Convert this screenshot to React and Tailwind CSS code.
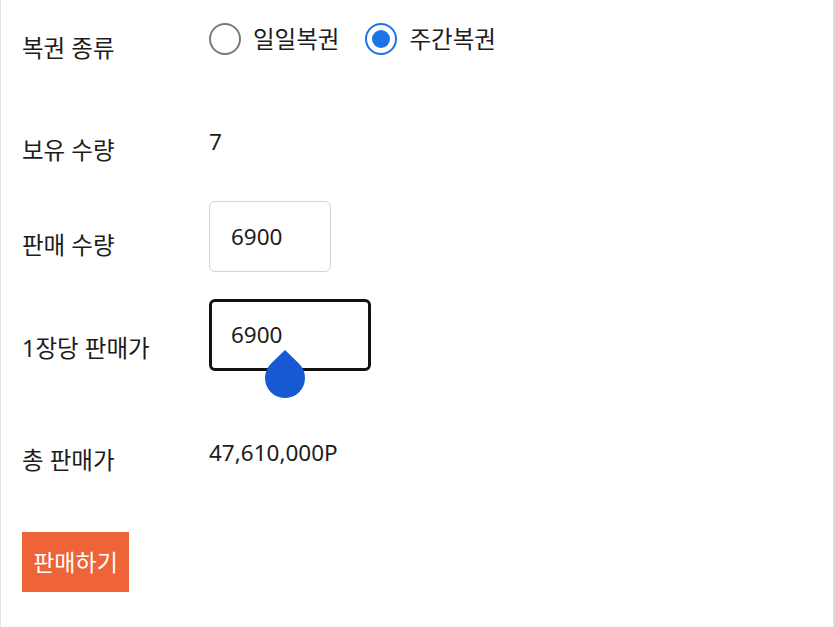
import { useState } from 'react';

const font = { fontFamily: '"Noto Sans", "Noto Sans CJK KR", sans-serif' };

function Radio({ checked, label, onClick }) {
  return (
    <button type="button" onClick={onClick} className="flex items-center h-8">
      <span
        className={`w-8 h-8 rounded-full border-2 flex items-center justify-center ${
          checked ? 'border-[#1a73e8]' : 'border-[#7a7a7a]'
        }`}
      >
        {checked && <span className="w-[18px] h-[18px] rounded-full bg-[#1a73e8]" />}
      </span>
      <span className="ml-[12px] leading-8 text-[23.5px]">{label}</span>
    </button>
  );
}

export default function App() {
  const [type, setType] = useState('weekly');

  return (
    <div
      style={font}
      className="w-[835px] h-[627px] bg-white border-l border-l-[#e4e4e4] border-r-2 border-r-[#dcdcdc] text-[23.5px] text-[#1c1c1c] pl-[21px] pt-[23px] overflow-hidden"
    >
      {/* 복권 종류 */}
      <div className="flex items-start">
        <div className="w-[187px] pt-[9px] leading-8">복권 종류</div>
        <div className="flex gap-[26px]">
          <Radio checked={type === 'daily'} label="일일복권" onClick={() => setType('daily')} />
          <Radio checked={type === 'weekly'} label="주간복권" onClick={() => setType('weekly')} />
        </div>
      </div>

      {/* 보유 수량 */}
      <div className="flex items-start mt-[62px]">
        <div className="w-[187px] pt-2 leading-8">보유 수량</div>
        <div className="leading-8 text-[22.5px]">7</div>
      </div>

      {/* 판매 수량 */}
      <div className="flex items-start mt-[35px]">
        <div className="w-[187px] pt-[28px] leading-8">판매 수량</div>
        <div className="w-[122px] h-[71px] border border-[#d4d4d4] rounded-md flex items-center pl-[21px] text-[22.5px]">
          6900
        </div>
      </div>

      {/* 1장당 판매가 */}
      <div className="flex items-start mt-[27px]">
        <div className="w-[187px] pt-[33px] leading-8">1장당 판매가</div>
        <div className="relative w-[162px] h-[72px] border-[3px] border-[#111] rounded-md flex items-center pl-[19px] text-[22.5px]">
          6900
          <svg
            className="absolute left-[53px] top-[48px]"
            width="40"
            height="48"
            viewBox="0 0 40 48"
          >
            <path d="M20 0 L34.14 13.86 A20 20 0 1 1 5.86 13.86 Z" fill="#1659d3" />
          </svg>
        </div>
      </div>

      {/* 총 판매가 */}
      <div className="flex items-start mt-[66px]">
        <div className="w-[187px] pt-[7px] leading-8">총 판매가</div>
        <div className="leading-8 text-[22.5px]">47,610,000P</div>
      </div>

      <button
        type="button"
        className="mt-[56px] w-[107px] h-[60px] bg-[#ee6337] text-white text-[23px] flex items-center justify-center"
      >
        판매하기
      </button>
    </div>
  );
}
